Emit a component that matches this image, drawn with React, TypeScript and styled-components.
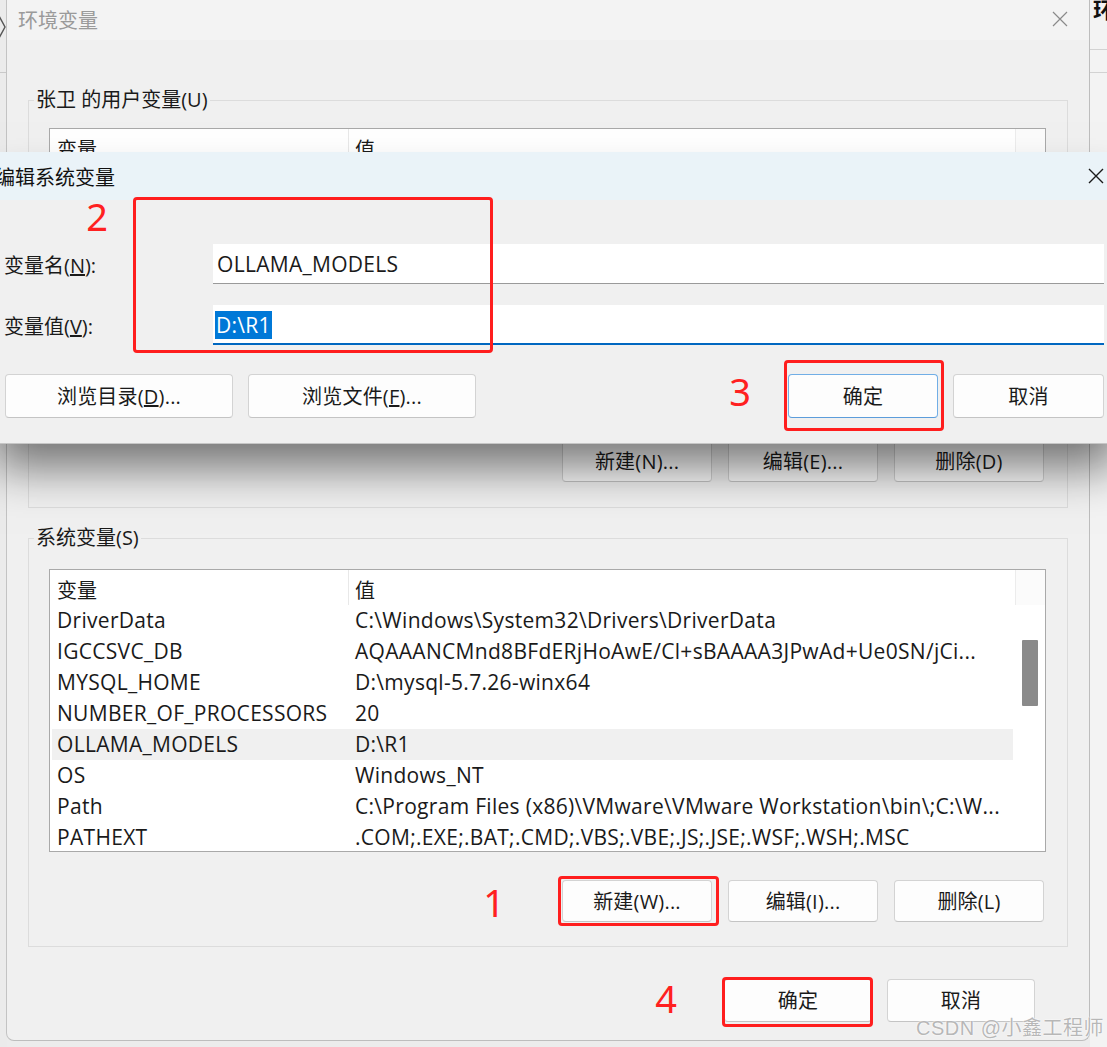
import React from 'react';
import styled, {createGlobalStyle} from 'styled-components';

const FONT = `"Open Sans", "Noto Sans CJK SC", sans-serif`;

const GlobalStyle = createGlobalStyle`
    html, body {
        margin: 0;
        padding: 0;
        background: #f0f0f0;
    }
    body {
        font-family: ${FONT};
    }
    * {
        box-sizing: border-box;
    }
`;

const Desktop = styled.div`
    position: relative;
    width: 1107px;
    height: 1047px;
    overflow: hidden;
    background: #ececec;
    font-family: ${FONT};
    color: #1a1a1a;
`;

// slivers of the windows sitting next to the main one
const LeftSliver = styled.div`
    position: absolute;
    left: 0;
    top: 0;
    width: 7px;
    height: 100%;
    background: #ebebeb;

    &::after {
        content: '';
        position: absolute;
        left: 0;
        right: 0;
        top: 72px;
        border-top: 1px solid #c9c9c9;
    }
`;

const Chevron = styled.svg`
    position: absolute;
    left: -2px;
    top: 14px;
`;

const RightSliver = styled.div`
    position: absolute;
    left: 1090px;
    top: 0;
    width: 17px;
    height: 100%;
    background: #f3f3f3;
    overflow: hidden;
`;

const SliverText = styled.span`
    position: absolute;
    left: 3px;
    top: -8px;
    font-size: 22px;
    font-weight: 700;
    color: #111;
    white-space: nowrap;
`;

const SliverRule = styled.div<{$top: number}>`
    position: absolute;
    left: 0;
    right: 0;
    top: ${p => p.$top}px;
    border-top: 1px solid #d2d2d2;
`;

// 环境变量 window
const EnvWindow = styled.section`
    position: absolute;
    left: 6px;
    top: 0;
    width: 1084px;
    height: 1041px;
    background: #f0f0f0;
    border-left: 1px solid #c3c3c3;
    border-right: 1px solid #bdbdbd;
    border-bottom: 1px solid #bdbdbd;
    border-radius: 0 0 8px 8px;
    display: flex;
    flex-direction: column;
`;

const TitleBar = styled.header`
    height: 40px;
    flex-shrink: 0;
    display: flex;
    align-items: center;
    justify-content: space-between;
    padding: 0 21px 2px 11px;
    background: #f3f3f3;
    font-size: 20px;
    color: #9a9a9a;
`;

const WindowBody = styled.div`
    padding: 0 21px;
    display: flex;
    flex-direction: column;
`;

const Group = styled.fieldset<{$top: number; $bottom: number}>`
    margin: ${p => p.$top}px 0 0;
    padding: 0 0 ${p => p.$bottom}px;
    border: 1px solid #dcdcdc;
    min-width: 0;
`;

const GroupLabel = styled.legend`
    margin-left: 5px;
    padding: 0 2px;
    font-size: 20px;
    line-height: 28px;
    color: #1a1a1a;
`;

const GroupBody = styled.div`
    padding: 0 21px 0 20px;
`;

const ListBox = styled.div<{$top: number; $height: number}>`
    margin-top: ${p => p.$top}px;
    height: ${p => p.$height}px;
    border: 1px solid #a9a9a9;
    background: #fff;
    display: flex;
    overflow: hidden;
`;

const ListMain = styled.div`
    flex: 1;
    min-width: 0;
    display: flex;
    flex-direction: column;
`;

const HeaderRow = styled.div`
    height: 35px;
    flex-shrink: 0;
    display: grid;
    grid-template-columns: 299px 1fr;
    font-size: 20px;
`;

const HeaderCell = styled.div<{$divider?: boolean}>`
    display: flex;
    align-items: center;
    padding: 3px 0 0 ${p => (p.$divider ? 7 : 6)}px;
    border-right: ${p => (p.$divider ? '1px solid #e8e8e8' : 'none')};
    white-space: nowrap;
`;

const Row = styled.div<{$selected?: boolean}>`
    height: 31px;
    margin: 0 2px;
    display: grid;
    grid-template-columns: 297px 1fr;
    align-items: center;
    background: ${p => (p.$selected ? '#f0f0f0' : 'transparent')};
    font-size: 21px;
    letter-spacing: 0.3px;
    line-height: 31px;
`;

const Cell = styled.div<{$first?: boolean}>`
    padding-left: ${p => (p.$first ? 5 : 6)}px;
    white-space: nowrap;
    overflow: hidden;
`;

const ScrollTrack = styled.div`
    width: 30px;
    flex-shrink: 0;
    display: flex;
    flex-direction: column;
    align-items: center;
`;

const ScrollHead = styled.div`
    height: 35px;
    align-self: stretch;
    border-left: 1px solid #ececec;
    background: #fbfbfb;
`;

const ScrollThumb = styled.div<{$offset: number; $length: number}>`
    margin-top: ${p => p.$offset}px;
    width: 16px;
    height: ${p => p.$length}px;
    background: #8a8a8a;
    border-radius: 1px;
`;

const ButtonRow = styled.div<{$top: number}>`
    margin-top: ${p => p.$top}px;
    padding-right: 2px;
    display: flex;
    justify-content: flex-end;
    gap: 16px;
`;

const Button = styled.button<{$width: number; $height: number; $default?: boolean}>`
    width: ${p => p.$width}px;
    height: ${p => p.$height}px;
    padding: 0 0 2px;
    background: #fdfdfd;
    border: 1px solid ${p => (p.$default ? '#71aee6' : '#d3d3d3')};
    border-bottom-color: ${p => (p.$default ? '#5c9ddb' : '#c4c4c4')};
    border-radius: 4px;
    font-family: ${FONT};
    font-size: 20px;
    letter-spacing: 0.2px;
    color: #1a1a1a;
    white-space: nowrap;
`;

const Footer = styled.div`
    margin-top: 32px;
    padding-right: 33px;
    display: flex;
    justify-content: flex-end;
    gap: 15px;
`;

// 编辑系统变量 dialog
const EditDialog = styled.section`
    position: absolute;
    left: -12px;
    top: 152px;
    width: 1136px;
    background: #f0f0f0;
    border-bottom: 1px solid #c6c6c6;
    box-shadow: 0 30px 44px -6px rgba(0, 0, 0, 0.52);
`;

const DialogTitle = styled.header`
    height: 48px;
    display: flex;
    align-items: center;
    justify-content: space-between;
    padding: 0 20px 0 7px;
    background: #eaf3f8;
    font-size: 20px;
    color: #111;
`;

const Form = styled.div`
    margin-top: 44px;
    padding: 0 20px 0 16px;
    display: grid;
    grid-template-columns: 209px 1fr;
    row-gap: 21px;
    align-items: center;
`;

const FieldLabel = styled.label`
    font-size: 20px;
    white-space: nowrap;
`;

const Field = styled.div<{$focused?: boolean}>`
    height: 40px;
    display: flex;
    align-items: center;
    padding: ${p => (p.$focused ? '2px 0 0 2px' : '0 0 0 4px')};
    background: #fff;
    border-bottom: ${p => (p.$focused ? '2px solid #0067c0' : '1px solid #9a9a9a')};
    font-size: 21px;
    letter-spacing: 0.3px;
`;

const Selection = styled.span`
    background: #0078d7;
    color: #fff;
    padding: 0 1px;
    line-height: 28px;
`;

const DialogButtons = styled.div`
    margin-top: 29px;
    padding: 0 20px 25px 17px;
    display: flex;
    gap: 15px;
`;

const Spacer = styled.div`
    flex: 1;
`;

// annotations drawn on top of the screenshot
const Callout = styled.div<{$x: number; $y: number; $w: number; $h: number}>`
    position: absolute;
    left: ${p => p.$x}px;
    top: ${p => p.$y}px;
    width: ${p => p.$w}px;
    height: ${p => p.$h}px;
    border: 3px solid #ff1e1e;
    border-radius: 4px;
    pointer-events: none;
`;

const Step = styled.span<{$x: number; $y: number}>`
    position: absolute;
    left: ${p => p.$x}px;
    top: ${p => p.$y}px;
    transform: translate(-50%, -50%);
    font-family: "Noto Sans", sans-serif;
    font-size: 38px;
    line-height: 1;
    color: #ff2020;
`;

const Watermark = styled.span`
    position: absolute;
    right: 3px;
    bottom: 6px;
    font-family: "Liberation Sans", "Noto Sans CJK SC", sans-serif;
    font-size: 20px;
    letter-spacing: 0.5px;
    color: rgba(160, 160, 160, 0.75);
    text-shadow: 0 0 1px #fff, 0 0 2px #fff;
    white-space: nowrap;
`;

const CloseIcon: React.FC<{color: string; size: number; weight: number}> = ({color, size, weight}) => (
    <svg width={size} height={size} viewBox="0 0 16 16">
        <path d="M1 1 L15 15 M15 1 L1 15" stroke={color} strokeWidth={weight} fill="none"/>
    </svg>
);

const systemVars: [string, string][] = [
    ['DriverData', 'C:\\Windows\\System32\\Drivers\\DriverData'],
    ['IGCCSVC_DB', 'AQAAANCMnd8BFdERjHoAwE/Cl+sBAAAA3JPwAd+Ue0SN/jCi...'],
    ['MYSQL_HOME', 'D:\\mysql-5.7.26-winx64'],
    ['NUMBER_OF_PROCESSORS', '20'],
    ['OLLAMA_MODELS', 'D:\\R1'],
    ['OS', 'Windows_NT'],
    ['Path', 'C:\\Program Files (x86)\\VMware\\VMware Workstation\\bin\\;C:\\W...'],
    ['PATHEXT', '.COM;.EXE;.BAT;.CMD;.VBS;.VBE;.JS;.JSE;.WSF;.WSH;.MSC'],
];

const ListHeader: React.FC = () => (
    <HeaderRow>
        <HeaderCell $divider>{'变量'}</HeaderCell>
        <HeaderCell>{'值'}</HeaderCell>
    </HeaderRow>
);

const App: React.FC = () => (
    <>
        <GlobalStyle/>
        <Desktop>
            <LeftSliver>
                <Chevron width="10" height="26" viewBox="0 0 10 26">
                    <path d="M1 2 L7 13 L1 24" stroke="#555" strokeWidth="1.4" fill="none"/>
                </Chevron>
            </LeftSliver>
            <RightSliver>
                <SliverText>{'环境'}</SliverText>
                <SliverRule $top={49}/>
                <SliverRule $top={72}/>
            </RightSliver>

            <EnvWindow>
                <TitleBar>
                    <span>{'环境变量'}</span>
                    <CloseIcon color="#8a8a8a" size={16} weight={1.2}/>
                </TitleBar>
                <WindowBody>
                    <Group $top={46} $bottom={25}>
                        <GroupLabel>{'张卫 的用户变量(U)'}</GroupLabel>
                        <GroupBody>
                            <ListBox $top={14} $height={292}>
                                <ListMain>
                                    <ListHeader/>
                                </ListMain>
                                <ScrollTrack>
                                    <ScrollHead/>
                                </ScrollTrack>
                            </ListBox>
                            <ButtonRow $top={20}>
                                <Button $width={150} $height={42}>{'新建(N)...'}</Button>
                                <Button $width={150} $height={42}>{'编辑(E)...'}</Button>
                                <Button $width={150} $height={42}>{'删除(D)'}</Button>
                            </ButtonRow>
                        </GroupBody>
                    </Group>

                    <Group $top={16} $bottom={24}>
                        <GroupLabel>{'系统变量(S)'}</GroupLabel>
                        <GroupBody>
                            <ListBox $top={17} $height={283}>
                                <ListMain>
                                    <ListHeader/>
                                    {systemVars.map(([name, value]) => (
                                        <Row key={name} $selected={name === 'OLLAMA_MODELS'}>
                                            <Cell $first>{name}</Cell>
                                            <Cell>{value}</Cell>
                                        </Row>
                                    ))}
                                </ListMain>
                                <ScrollTrack>
                                    <ScrollHead/>
                                    <ScrollThumb $offset={35} $length={66}/>
                                </ScrollTrack>
                            </ListBox>
                            <ButtonRow $top={28}>
                                <Button $width={150} $height={42}>{'新建(W)...'}</Button>
                                <Button $width={150} $height={42}>{'编辑(I)...'}</Button>
                                <Button $width={150} $height={42}>{'删除(L)'}</Button>
                            </ButtonRow>
                        </GroupBody>
                    </Group>

                    <Footer>
                        <Button $width={148} $height={43}>{'确定'}</Button>
                        <Button $width={148} $height={43}>{'取消'}</Button>
                    </Footer>
                </WindowBody>
            </EnvWindow>

            <EditDialog>
                <DialogTitle>
                    <span>{'编辑系统变量'}</span>
                    <CloseIcon color="#1a1a1a" size={16} weight={1.4}/>
                </DialogTitle>
                <Form>
                    <FieldLabel>{'变量名('}<u>{'N'}</u>{'):'}</FieldLabel>
                    <Field>{'OLLAMA_MODELS'}</Field>
                    <FieldLabel>{'变量值('}<u>{'V'}</u>{'):'}</FieldLabel>
                    <Field $focused>
                        <Selection>{'D:\\R1'}</Selection>
                    </Field>
                </Form>
                <DialogButtons>
                    <Button $width={228} $height={44}>{'浏览目录('}<u>{'D'}</u>{')...'}</Button>
                    <Button $width={228} $height={44}>{'浏览文件('}<u>{'F'}</u>{')...'}</Button>
                    <Spacer/>
                    <Button $width={150} $height={44} $default>{'确定'}</Button>
                    <Button $width={151} $height={44}>{'取消'}</Button>
                </DialogButtons>
            </EditDialog>

            <Callout $x={133} $y={197} $w={360} $h={156}/>
            <Step $x={97} $y={216}>{'2'}</Step>
            <Callout $x={784} $y={360} $w={160} $h={71}/>
            <Step $x={740} $y={391}>{'3'}</Step>
            <Callout $x={558} $y={876} $w={161} $h={50}/>
            <Step $x={494} $y={902}>{'1'}</Step>
            <Callout $x={722} $y={977} $w={151} $h={50}/>
            <Step $x={666} $y={998}>{'4'}</Step>

            <Watermark>{'CSDN @小鑫工程师'}</Watermark>
        </Desktop>
    </>
);

export default App;
